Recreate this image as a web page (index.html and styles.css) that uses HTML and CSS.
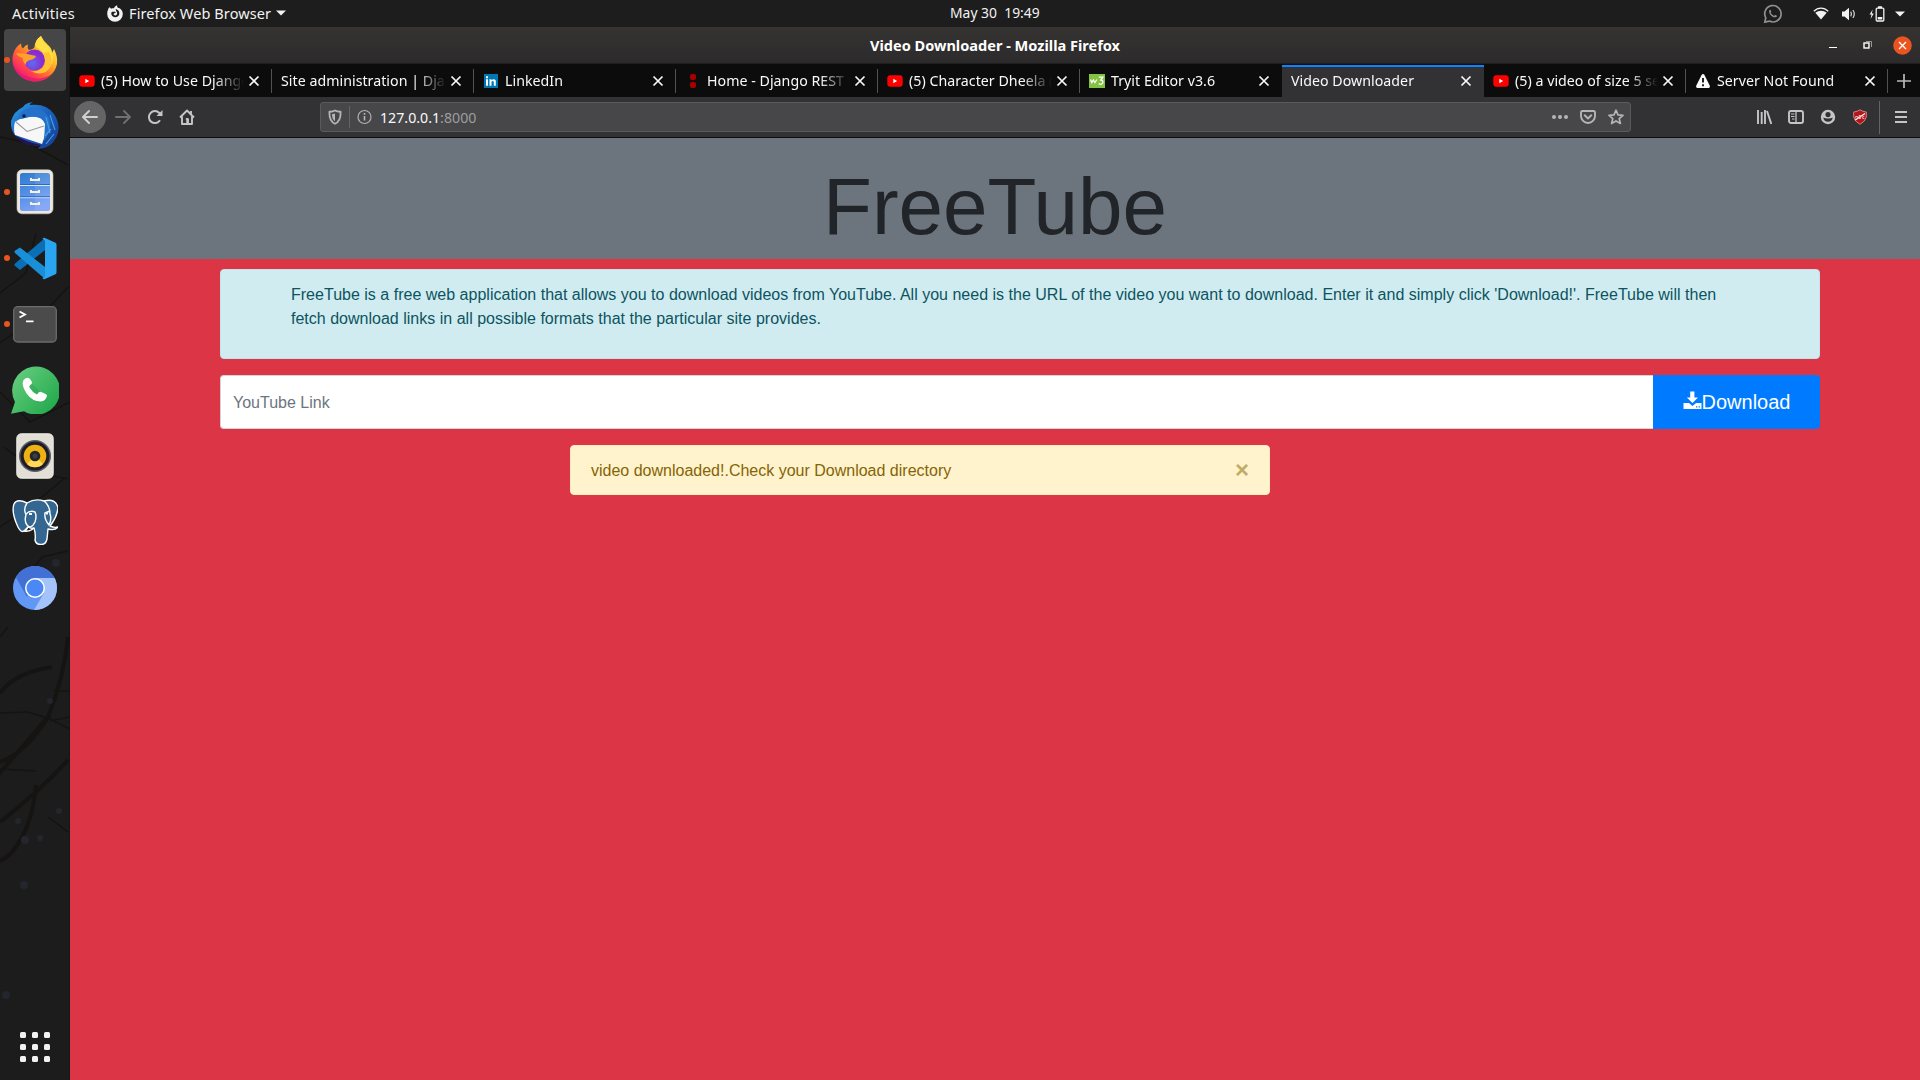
FILE: index.html
```html
<!DOCTYPE html>
<html lang="en">
<head>
<meta charset="utf-8">
<title>Video Downloader</title>
<link rel="stylesheet" href="styles.css">
</head>
<body>
<svg class="defs" width="0" height="0">
  <symbol id="yt" viewBox="0 0 16 12"><rect x=".3" y=".3" width="15.4" height="11.4" rx="3" fill="#f00"/><path d="M6.3 3.7v4.6L10.2 6z" fill="#fff"/></symbol>
  <symbol id="x" viewBox="0 0 12 12"><path d="M1.5 1.5l9 9M10.5 1.5l-9 9" stroke="#f9f9fa" stroke-width="1.7" fill="none"/></symbol>
</svg>
<header class="topbar">
  <span class="activities">Activities</span>
  <div class="appmenu">
    <svg width="16" height="17" viewBox="0 0 16 17"><path d="M2.2 2.3C2.9 2.6 3.6 3 4.1 3.7 5 3.2 6 3.1 7 3.3 7.400 1.900 8.500.9 10.200.2 9.900 1.400 10.400 2.300 11.300 3c.8-.1 1.400.1 1.700.5C15 5 15.800 7 15.800 9A7.800 7.700 0 0 1 .2 9C.2 6.400 1 4.300 2.200 2.300z" fill="#f2f2f2"/><path d="M4.500 7.200c1-.6 2.500-.5 4.300-.1 0 1-1.800 1.300-2.300 2 .2 1 1.500 1.700 2.500 1.200 1.600-.8 1.500-2.900.2-4.300l-.6-2c3.500.8 4.500 4 3.300 6.300-1.300 2.200-4.500 2.600-6.300.9-1.300-1.300-1.600-2.600-1.100-4z" fill="#1d1d1d"/></svg>
    <span class="appname">Firefox Web Browser</span>
    <svg width="10" height="6" viewBox="0 0 10 6"><path d="M0 .5h10L5 5.500z" fill="#f2f2f2"/></svg>
  </div>
  <span class="clock">May 30&nbsp; 19:49</span>
  <div class="tray">
    <svg class="tray-wa" width="20" height="20" viewBox="0 0 20 20" fill="none" stroke="#8f8f8f" stroke-width="1.700"><path d="M1.800 18.200l1-4.400A8.200 8.200 0 1 1 6.300 17.100z"/><path d="M6.300 6.300c.7-1.200 1.500-.6 1.900.9.200.8-.7.900-.4 1.500.7 1.300 1.700 2.400 3.300 3 .5 0 .8-1 1.400-.7 1.500.6 1.900 1 1.200 1.700-3.700 2.600-8.600-3-7.400-6.400z" fill="#8f8f8f" stroke="none"/></svg>
    <svg width="16" height="13" viewBox="0 0 16 13"><path d="M.8 4.300C5 .1 11 .1 15.200 4.300" fill="none" stroke="#f2f2f2" stroke-width="1.300"/><path d="M2.300 5.800C5.500 2.900 10.500 2.900 13.700 5.800L8 12.600z" fill="#f2f2f2"/></svg>
    <svg width="16" height="14" viewBox="0 0 16 14"><path d="M1 4.500h2.500L8 .8v12.400L3.500 9.500H1z" fill="#f2f2f2"/><path d="M9.700 4.700q1.500 2.300 0 4.600M11.900 3q2.800 4 0 8" fill="none" stroke="#d8d8d8" stroke-width="1.200"/></svg>
    <svg width="16" height="16" viewBox="0 0 16 16"><path d="M3.700 3.500L.5 8.600h2L1.600 13l3.200-5.600h-2z" fill="#f2f2f2"/><rect x="7.200" y="2.200" width="7.600" height="12.800" rx="1" fill="none" stroke="#f2f2f2" stroke-width="1.300"/><path d="M9 .3h4v2H9zM8.700 11h4.600v2.400H8.700z" fill="#f2f2f2"/></svg>
    <svg width="10" height="6" viewBox="0 0 10 6"><path d="M0 .5h10L5 5.500z" fill="#f2f2f2"/></svg>
  </div>
</header>
<div class="desktop">
  <nav class="dock">
    <svg class="wallpaper" width="70" height="1053" viewBox="0 0 70 1053" fill="none" stroke="#151412">
      <path d="M68 610Q64 650 48 690Q26 726 0 735M0 666Q16 645 52 640M48 690L-2 748M68 733Q40 764 0 795M36 758Q33 790 22 810T0 834" stroke-width="4"/>
      <path d="M0 686L28 685 50 692 70 702M0 742L36 744M48 790l20 15M8 600L0 610M70 664l-16 0M70 690l-20 4M0 365l30 30 40-20M4 420l34 26 30 6M0 110l28 6 40 22M36 206l-10 40-26 20M68 260l-24 26-44 30M0 500l30-20 36-30M20 560l22-30 26-6" stroke-width="1.500"/>
      <g fill="#24262d" stroke="none"><circle cx="25" cy="813" r="4"/><circle cx="40" cy="811" r="3"/><circle cx="59" cy="784" r="3"/><circle cx="18" cy="794" r="3"/><circle cx="24" cy="858" r="4"/><circle cx="6" cy="968" r="4"/><circle cx="56" cy="536" r="4"/><circle cx="42" cy="180" r="4"/><circle cx="50" cy="674" r="3"/></g>
    </svg>
    <div class="app running active">
      <svg width="46" height="47" viewBox="0 0 46 47">
        <defs><linearGradient id="ff" x1=".9" y1=".1" x2=".2" y2=".95"><stop offset="0" stop-color="#fff04a"/><stop offset=".3" stop-color="#ffc02c"/><stop offset=".55" stop-color="#ff7a2a"/><stop offset=".8" stop-color="#ff3b52"/><stop offset="1" stop-color="#e31587"/></linearGradient><radialGradient id="fp" cx=".4" cy=".65"><stop offset="0" stop-color="#5f6cf0"/><stop offset="1" stop-color="#8a2bd0"/></radialGradient></defs>
        <path d="M4 12Q6 9 9 7.500Q9 11 11 12.500Q13 9 16 8.500Q15 12 17 14Q22 13 22.500 11Q23 4 29 0Q32 6 36 9Q40 12 40 17L42 13Q46 21 45 28A22.500 22 0 0 1 .5 25Q0 18 4 12z" fill="url(#ff)"/>
        <path d="M1 27A22.500 22 0 0 0 40 38Q29 45 17 41Q5 38 1 27z" fill="#e81672" opacity=".75"/>
        <path d="M24 11Q22 5 29 0Q30 6 36 11Q43 18 40 28L31 24Q33 15 24 11z" fill="#ffe045"/>
        <circle cx="22.500" cy="24" r="10.500" fill="url(#fp)"/>
        <path d="M31 17Q35 25 31 31Q27 36 19 35Q32 42 39 30Q41 22 37 16z" fill="#ffc233"/>
        <path d="M4 17Q14 17 24 20Q23 23 18 24Q14 25 13.500 29Q10 24 11 22Q6 21 4 17z" fill="#ffa02a"/>
      </svg>
    </div>
    <div class="app">
      <svg width="48" height="48" viewBox="0 0 48 48">
        <defs><linearGradient id="tb" x1="0" y1="0" x2="1" y2="1"><stop offset="0" stop-color="#2d9ce4"/><stop offset=".5" stop-color="#1b60bd"/><stop offset="1" stop-color="#17398b"/></linearGradient></defs>
        <path d="M12 5Q15 0 22 .5Q18 2 19 3Q35 1 43 12Q51 24 45 36Q39 47 27 47L30 43Q17 45 9 38Q-1 31 0 19Q3 9 12 5z" fill="url(#tb)"/>
        <path d="M4 20L9 17L18 15Q30 13 34 21Q36 30 31 42L4 33Q2 26 4 20z" fill="#f7f7f7"/><path d="M5 20L16 29.500L33 24" fill="none" stroke="#999" stroke-width="1.100"/>
        <path d="M18 15Q31 13 34 22L33 39Q43 25 37 14Q29 4 18 6Q10 8 7 16l3 1z" fill="#2571c9"/><path d="M35 15l4 16M39 13l5 15M34 34l6-7M35 42l8-10" stroke="#3f9fdf" stroke-width="1.200"/>
        <path d="M4 33Q15 40 30 43Q15 45 8 38z" fill="#251357"/><circle cx="13" cy="14" r="1.800" fill="#0e1d4d"/>
      </svg>
    </div>
    <div class="app running">
      <svg width="38" height="46" viewBox="0 0 38 46">
        <defs><linearGradient id="fi" x1="0" y1="0" x2=".3" y2="1"><stop offset="0" stop-color="#2b7bd0"/><stop offset="1" stop-color="#78a0f5"/></linearGradient></defs>
        <rect x="1" y=".8" width="36" height="44" rx="5" fill="#ece7df" stroke="#c8c2b8" stroke-width=".6"/><rect x="4" y="4" width="30" height="38" rx="2.500" fill="url(#fi)"/><path d="M19 4h13q2 0 2 2v34q0 2-2 2H19z" fill="#fff" opacity=".1"/><path d="M4 16.500h30M4 28.700h30" stroke="#d6e6fb"/><path d="M4 15.500h30M4 27.700h30" stroke="#1f5fb0" stroke-width=".8"/>
        <g fill="none" stroke="#f5f1e8" stroke-width="2"><path d="M15 9v2h8V9M15 21v2h8v-2M15 33v2h8v-2"/></g>
      </svg>
    </div>
    <div class="app running">
      <svg width="43" height="43" viewBox="0 0 43 43"><path d="M31 1v12L6 33 .8 28.700q-.6-1 0-2z" fill="#0b6fb5"/><path d="M6 10.500L31 30v12L.8 15.800q-.6-1 0-2z" fill="#188fd6"/><path d="M31 1l10.500 4.700q1 .7 1 2v27.600q0 1.300-1 2L31 42q-1.500.7-2.500-.7l2.500-2V3.700l-2.500-2Q29.500.5 31 1z" fill="#2aa5f2"/></svg>
    </div>
    <div class="app running">
      <svg width="44" height="37" viewBox="0 0 44 37"><rect x=".7" y=".7" width="42.600" height="35.300" rx="4" fill="#4b4b4b" stroke="#6c6c6c" stroke-width="1.300"/><path d="M6.500 5.500l5.500 3-5.500 3M13 15.300h7.500" fill="none" stroke="#fff" stroke-width="1.800"/></svg>
    </div>
    <div class="app">
      <svg width="48" height="48" viewBox="0 0 48 48"><defs><linearGradient id="wa" x1="0" y1="0" x2="1" y2=".8"><stop offset="0" stop-color="#6bd082"/><stop offset="1" stop-color="#22a94c"/></linearGradient></defs><path d="M0 47.800L4 36A24 24 0 1 1 13 45.300z" fill="url(#wa)"/><path d="M20 17l17 16Q29 40 22 34L13 23z" fill="#25994a" opacity=".35"/><path d="M12.500 14Q16 10.500 18.500 12.500Q22 16 20.500 18Q17.500 20 18.500 21.500Q21 26 26 28.500Q28 25 30 26Q36 28 36 29.500Q35 35 30 35.500Q22 36 15.500 27.500Q10 19 12.500 14z" fill="#fff"/></svg>
    </div>
    <div class="app">
      <svg width="38" height="46" viewBox="0 0 38 46"><rect x=".8" y=".8" width="36.400" height="44.400" rx="4.500" fill="#e2dfd6" stroke="#f2efe8"/><circle cx="19" cy="23" r="16" fill="#5b5c63"/><circle cx="19" cy="23" r="14.500" fill="#1d1d27"/><circle cx="19" cy="23" r="11.300" fill="#eeb013"/><path d="M11 31A11.300 11.300 0 0 0 27 31L19 23z" fill="#ffd95a"/><circle cx="19" cy="23" r="5.300" fill="#24272a"/><circle cx="19" cy="23" r="2.500" fill="#3c4043"/></svg>
    </div>
    <div class="app">
      <svg width="46" height="46" viewBox="0 0 46 46" fill="#336791" stroke="#fff" stroke-width="1.400" stroke-linejoin="round"><path d="M15 4Q5-1 2 5Q-1 13 6 28Q9 34 12 32L16 28Q19 30 22 29Q24 36 23 41Q24 46 30 45.500Q34 45 35 40L36 30Q43 32 46 28Q42 29 38 27Q45 18 46 9Q44-1 32 2Q23-1 15 4z"/><path d="M15 4Q11 10 14 16Q12 22 15 26Q19 31 23 23Q25 17 23 13Q18 11 14 15M32 2Q38 7 38 15Q40 20 37 26Q32 20 33 14L38 12M16 28q-2 4-4 4 5 1 9-2" fill="none"/><path d="M17 15h3M34 14.500h2" stroke-width="1.800"/></svg>
    </div>
    <div class="app">
      <svg width="44" height="44" viewBox="0 0 44 44"><defs><clipPath id="cc"><circle cx="22" cy="22" r="22"/></clipPath></defs><g clip-path="url(#cc)"><path d="M0 0h44v44H0z" fill="#6197f5"/><path d="M1 8L14 31L22 12H44V0H0z" fill="#4270d5"/><path d="M22 12h22v32H21l10-17z" fill="#a4c3fa"/></g><circle cx="22" cy="22" r="10" fill="#fff"/><circle cx="22" cy="22" r="8.500" fill="#4a88f5"/></svg>
    </div>
    <div class="grid-button">
      <i></i><i></i><i></i><i></i><i></i><i></i><i></i><i></i><i></i>
    </div>
  </nav>
  <main class="window">
    <div class="titlebar">
      <span class="title">Video Downloader - Mozilla Firefox</span>
      <div class="controls">
        <svg width="8" height="18" viewBox="0 0 8 18"><path d="M0 11.500h8" stroke="#fff"/></svg>
        <svg width="10" height="18" viewBox="0 0 10 18" fill="none"><path d="M3 5.500h5.500V11" stroke="#999"/><rect x="1" y="7" width="5" height="5" stroke="#fff" stroke-width="1.400"/></svg>
        <svg width="19" height="19" viewBox="0 0 19 19"><circle cx="9.500" cy="9.500" r="9.300" fill="#e95420"/><path d="M6 6l7 7M13 6l-7 7" stroke="#fff" stroke-width="1.300"/></svg>
      </div>
    </div>
    <div class="tabs">
      <div class="tab"><svg class="fav" width="16" height="12"><use href="#yt"/></svg><span>(5) How to Use Django</span><svg class="x" width="12" height="12"><use href="#x"/></svg></div>
      <div class="tab"><span>Site administration | Django</span><svg class="x" width="12" height="12"><use href="#x"/></svg></div>
      <div class="tab"><svg class="fav" width="16" height="16" viewBox="0 0 16 16"><path d="M1 1h14v14H1z" fill="#0077b5"/><path d="M3 6.300h2v6.500H3zM3 3.200h2v2H3zM6.500 6.300h2v1q2.500-2.300 4.300.2v5.300h-2V8.700q-1.200-1.500-2.300 0v4.100h-2z" fill="#fff"/></svg><span>LinkedIn</span><svg class="x" width="12" height="12"><use href="#x"/></svg></div>
      <div class="tab"><svg class="fav" width="16" height="16" viewBox="0 0 16 16" fill="#a30000"><circle cx="8" cy="4" r="3.200"/><circle cx="8" cy="12" r="3.200"/></svg><span>Home - Django REST framework</span><svg class="x" width="12" height="12"><use href="#x"/></svg></div>
      <div class="tab"><svg class="fav" width="16" height="12"><use href="#yt"/></svg><span>(5) Character Dheela (</span><svg class="x" width="12" height="12"><use href="#x"/></svg></div>
      <div class="tab last"><svg class="fav" width="16" height="16" viewBox="0 0 16 16"><path d="M0 1h16v14H0z" fill="#83c341"/><path d="M1.500 6.500l1.300 3 1.600-2.500 1.500 2.500 2-3M9.800 4.200h4L11.800 7q2.500.3 2 2.800-1.300 2.500-4 .8" fill="none" stroke="#fff" stroke-width="1.300"/></svg><span>Tryit Editor v3.6</span><svg class="x" width="12" height="12"><use href="#x"/></svg></div>
      <div class="tab current"><span>Video Downloader</span><svg class="x" width="12" height="12"><use href="#x"/></svg></div>
      <div class="tab"><svg class="fav" width="16" height="12"><use href="#yt"/></svg><span>(5) a video of size 5 seconds</span><svg class="x" width="12" height="12"><use href="#x"/></svg></div>
      <div class="tab"><svg class="fav" width="16" height="16" viewBox="0 0 16 16"><path d="M8 1q.9 0 1.300.8l5.500 11q.7 2-1.100 2.200H2.300Q.5 14.800 1.200 12.800l5.500-11Q7.100 1 8 1z" fill="#f9f9fa"/><path d="M8 5v4.500M8 11.200v2" stroke="#0c0c0d" stroke-width="1.800"/></svg><span>Server Not Found</span><svg class="x" width="12" height="12"><use href="#x"/></svg></div>
      <div class="newtab"><svg width="14" height="14" viewBox="0 0 14 14"><path d="M7 0v14M0 7h14" stroke="#b9b9ba" stroke-width="1.700"/></svg></div>
    </div>
    <div class="toolbar">
      <div class="nav">
        <div class="back"><svg width="16" height="16" viewBox="0 0 16 16" fill="none" stroke="#d0d0d1" stroke-width="1.900" stroke-linecap="round" stroke-linejoin="round"><path d="M15 8H1.500M7 2L1 8l6 6"/></svg></div>
        <svg width="16" height="16" viewBox="0 0 16 16" fill="none" stroke="#707072" stroke-width="1.800" stroke-linecap="round" stroke-linejoin="round"><path d="M1 8h13.500M9 2l6 6-6 6"/></svg>
        <svg width="16" height="16" viewBox="0 0 16 16" fill="none" stroke="#c5c5c6" stroke-width="2"><path d="M13 11.300A6 6 0 1 1 12.300 4L14 5.800"/><path d="M15.500 1v6h-6z" fill="#c5c5c6" stroke="none"/></svg>
        <svg width="16" height="16" viewBox="0 0 16 16" fill="none" stroke="#c5c5c6" stroke-width="1.900" stroke-linejoin="round"><path d="M1 8.500L8 1.500l7 7M3 7.500V15h10V7.500M12 5V2"/><path d="M8 9v6M6.800 10h2.400v5" stroke-width="1.500"/></svg>
      </div>
      <div class="url">
        <svg width="14" height="16" viewBox="0 0 14 16"><path d="M7 1.500q3 1.500 5.500 1.200Q13.200 12 7 14.800.8 12 1.500 2.700 4 3 7 1.500z" fill="none" stroke="#b5b5b6" stroke-width="1.800"/><path d="M7 4.500v7.700Q3.800 10 4 5.200z" fill="#b5b5b6"/></svg>
        <i class="sep"></i>
        <svg width="16" height="16" viewBox="0 0 16 16"><circle cx="7.500" cy="8" r="6.500" fill="none" stroke="#b0b0b1" stroke-width="1.200"/><path d="M7.500 7v4.500M7.500 4v1.700" stroke="#b5b5b6" stroke-width="1.600"/></svg>
        <span class="address">127.0.0.1<em>:8000</em></span>
        <div class="actions">
          <svg width="16" height="16" viewBox="0 0 16 16" fill="#b5b5b6"><circle cx="2" cy="8" r="2"/><circle cx="8" cy="8" r="2"/><circle cx="14" cy="8" r="2"/></svg>
          <svg width="16" height="16" viewBox="0 0 16 16" fill="none" stroke="#b5b5b6" stroke-width="1.900" stroke-linecap="round" stroke-linejoin="round"><path d="M2.500 2h11q1.500 0 1.500 1.500V7A7 7 0 0 1 1 7V3.500Q1 2 2.500 2z"/><path d="M4.700 6.300L8 9.500l3.300-3.200"/></svg>
          <svg width="16" height="16" viewBox="0 0 16 16" fill="none" stroke="#b5b5b6" stroke-width="1.700" stroke-linejoin="round"><path d="M8 1.200l2 4.700 5 .4-3.800 3.300 1.200 4.900L8 11.900l-4.400 2.600 1.200-4.900L1 6.300l5-.4z"/></svg>
        </div>
      </div>
      <div class="tools">
        <svg width="16" height="16" viewBox="0 0 16 16" stroke="#c5c5c6" stroke-width="1.900"><path d="M2 1v14M5.700 3v12M9 1v14M11 2l4.300 13"/></svg>
        <svg width="16" height="16" viewBox="0 0 16 16" fill="none" stroke="#c5c5c6" stroke-width="1.900"><rect x="1" y="2" width="14" height="12" rx="2"/><path d="M8 2v12" stroke-width="1.300"/><path d="M3 5h3.500M3 7.500h3.500M4 10h2.500" stroke-width="1"/></svg>
        <svg width="16" height="16" viewBox="0 0 16 16"><circle cx="8" cy="8" r="7.200" fill="#c5c5c6"/><circle cx="8" cy="5.600" r="2.600" fill="#323234"/><path d="M3.300 8.500Q5 9.500 8 9.500t4.700-1Q12 12.800 8 12.800T3.300 8.500z" fill="#323234"/></svg>
        <svg width="16" height="16" viewBox="0 0 16 16"><path d="M8 .8Q10.500 2.600 14.300 3V8Q13.500 12.500 8 15.300 2.500 12.500 1.700 8V3Q5.500 2.600 8 .8z" fill="#b3151a" stroke="#dc8a8a" stroke-width=".9"/><path d="M3.300 11L13 4.500" stroke="#fff" stroke-width="1.100"/><path d="M3.700 9.500V7.500h1.800v2M7 6.500h1.600v3H7zM12.300 7.500h-1.600v2h1.600" fill="none" stroke="#f3cccc" stroke-width=".8"/></svg>
        <i class="sep"></i>
        <svg width="12" height="16" viewBox="0 0 12 16" stroke="#c5c5c6" stroke-width="2"><path d="M0 3h12M0 8h12M0 13h12"/></svg>
      </div>
    </div>
    <div class="page">
      <h1 class="brand">FreeTube</h1>
      <section class="body">
        <div class="info"><p>FreeTube is a free web application that allows you to download videos from YouTube. All you need is the URL of the video you want to download. Enter it and simply click 'Download!'. FreeTube will then<br>fetch download links in all possible formats that the particular site provides.</p></div>
        <form class="search">
          <input class="link" type="text" placeholder="YouTube Link">
          <button class="download" type="button"><svg width="19" height="19" viewBox="0 0 19 19"><path d="M7.200.5h4.200v6H15L9.500 12 3.800 6.500h3.400z" fill="#fff"/><path d="M.5 12H6l3.500 3L13 12h5.500v6H.5z" fill="#fff"/><path d="M13 15.200h1.300v1.300H13zM15.600 15.200h1.300v1.300h-1.300z" fill="#007bff"/></svg>Download</button>
        </form>
        <div class="notice"><span>video downloaded!.Check your Download directory</span><b>×</b></div>
      </section>
    </div>
  </main>
</div>
</body>
</html>
```
FILE: styles.css
```css
* { box-sizing: border-box; }
body { margin: 0; width: 1920px; height: 1080px; overflow: hidden; background: #1d1d1d; color: #f2f2f2; font: 14.500px/20px "Noto Sans", sans-serif; }
svg { display: block; flex: none; }
.defs { position: absolute; }

.topbar { height: 27px; background: #1d1d1d; display: grid; grid-template-columns: 107px 843px 1fr auto; align-items: center; }
.activities { padding: 0 0 2px 12px; letter-spacing: .25px; }
.appmenu { display: flex; align-items: center; gap: 5px; padding-bottom: 1px; }
.appname { width: 142px; margin-left: 1px; padding-bottom: 1px; letter-spacing: .1px; white-space: nowrap; }
.clock { font-size: 13.900px; white-space: nowrap; padding-bottom: 1px; }
.tray { display: flex; align-items: center; gap: 12px; padding-right: 15px; }
.tray-wa { margin-right: 18px; }
.tray svg:last-child { margin-left: -2px; }

.desktop { display: flex; height: 1053px; }
.dock { position: relative; width: 70px; background: #1d1c1d; padding: 2px 4px 18px; display: flex; flex-direction: column; gap: 4px; border-right: 1px solid #171717; }
.wallpaper { position: absolute; left: 0; top: 0; }
.app { position: relative; width: 62px; height: 62px; border-radius: 4px; display: flex; align-items: center; justify-content: center; }
.app.active { background: #474647; padding-bottom: 2px; }
.app.running::before { content: ""; position: absolute; left: 0; top: 28px; width: 6px; height: 6px; border-radius: 50%; background: #e95420; }
.grid-button { position: relative; margin: auto auto 0; display: grid; grid-template-columns: repeat(3, 6px); gap: 6px; }
.grid-button i { width: 6px; height: 6px; border-radius: 1.500px; background: #f2f2f2; }

.window { width: 1850px; display: flex; flex-direction: column; }
.titlebar { height: 37px; display: grid; grid-template-columns: 1fr auto 1fr; align-items: center; background: linear-gradient(#353432, #2c2a2b); border-bottom: 1px solid #1f1e1e; }
.title { grid-column: 2; font-weight: bold; font-size: 14.550px; color: #fff; white-space: nowrap; }
.controls { display: flex; align-items: center; justify-content: flex-end; gap: 26px; padding-right: 8px; }
.controls svg:last-child { margin-left: -6px; }

.tabs { height: 33px; display: flex; background: #0c0c0d; }
.tab { position: relative; width: 202px; padding: 0 12px 0 9px; display: flex; align-items: center; font-size: 14.200px; color: #f9f9fa; }
.tab::after { content: ""; position: absolute; right: 0; top: 5px; width: 1px; height: 24px; background: #525253; }
.tab.last::after, .tab.current::after { display: none; }
.fav { margin-right: 6px; }
.tab span { flex: 1; min-width: 0; overflow: hidden; white-space: nowrap; letter-spacing: .03px; mask-image: linear-gradient(to left, transparent, #000 30px); margin-right: 4px; }
.current { background: linear-gradient(#0c0c0d 1px, #0a84ff 1px, #0a84ff 3px, #323234 3px); }
.newtab { width: 32px; display: flex; align-items: center; justify-content: center; }

.toolbar { height: 41px; background: #323234; border-bottom: 1px solid #0c0c0d; display: flex; align-items: center; }
.nav { width: 250px; padding-left: 4px; display: flex; align-items: center; gap: 16px; }
.nav .back + svg { margin-left: -7px; }
.back { width: 32px; height: 32px; border-radius: 50%; background: #656566; display: flex; align-items: center; justify-content: center; }
.url { width: 1311px; height: 30px; border: 1px solid #5a5a5c; border-radius: 3px; background: #474749; display: flex; align-items: center; padding: 0 6px 0 7px; }
.sep { width: 1px; height: 22px; background: #636365; margin: 0 7px; }
.address { margin-left: 7px; padding-top: 2px; font-size: 14.200px; color: #f9f9fa; }
.address em { font-style: normal; color: #9c9c9e; }
.actions { margin-left: auto; display: flex; gap: 12px; }
.tools { flex: 1; padding: 0 13px 0 125px; display: flex; align-items: center; gap: 16px; }
.tools .sep { height: 33px; margin: 0 -5px 0 -5px; }
.tools svg:last-child { margin-left: 4px; }

.page { flex: 1; background: #dc3545; font-family: "Liberation Sans", Arial, sans-serif; font-size: 16px; line-height: 24px; }
.brand { margin: 0; height: 121px; padding-top: 21px; background: #6c757d; color: #212529; text-align: center; font-size: 80px; line-height: 96px; font-weight: 400; }
.body { width: 1600px; margin: 10px 0 0 150px; display: flex; flex-direction: column; gap: 16px; }
.info { height: 90px; padding: 13px 70px 11px; border: 1px solid #bee5eb; border-radius: 4px; background: #d1ecf1; color: #0c5460; white-space: nowrap; letter-spacing: .01px; }
.info p { margin: 0; }
.search { height: 54px; margin: 0; display: flex; }
.link { flex: 1; border: 1px solid #ced4da; border-right: 0; border-radius: 4px 0 0 4px; padding: 2px 12px 0; font: inherit; background: #fff; }
.link::placeholder { color: #6c757d; opacity: 1; }
.download { width: 167px; border: 0; border-radius: 0 4px 4px 0; background: #007bff; color: #fff; font: 20px/30px "Liberation Sans", Arial, sans-serif; padding: 0; display: flex; align-items: center; justify-content: center; }
.download svg { margin-bottom: 3px; }
.notice { width: 700px; height: 50px; margin-left: 350px; padding: 0 20px; border: 1px solid #ffeeba; border-radius: 4px; background: #fff3cd; color: #856404; display: flex; justify-content: space-between; align-items: center; }
.notice span { padding-top: 2px; }
.notice b { font-size: 24px; color: #c2ac68; }
```
